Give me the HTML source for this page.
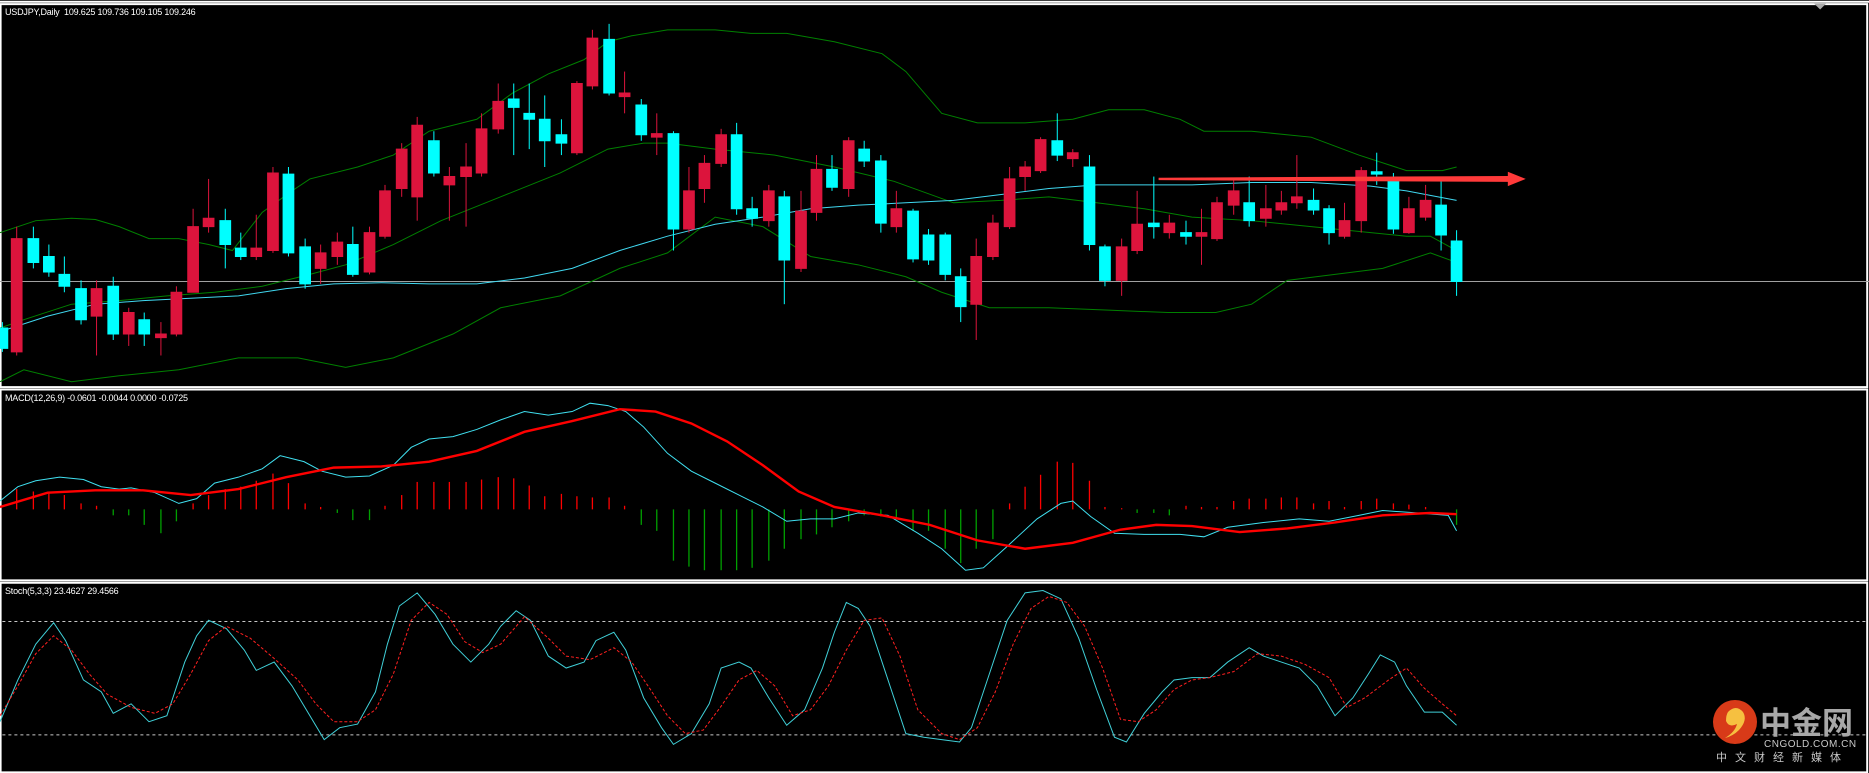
<!DOCTYPE html>
<html><head><meta charset="utf-8"><style>
html,body{margin:0;padding:0;background:#000;width:1869px;height:773px;overflow:hidden;position:relative}
svg{position:absolute;left:0;top:0}
.t{position:absolute;color:#fff;font:9px "Liberation Sans",sans-serif;letter-spacing:-0.2px;white-space:nowrap}
.r{fill:#dc143c;stroke:#dc143c}.c{fill:#00ffff;stroke:#00ffff}
line,rect,polyline{vector-effect:non-scaling-stroke}
</style></head><body>
<svg width="1869" height="773" viewBox="0 0 1568 648" preserveAspectRatio="none">
<rect x="0" y="0" width="1568" height="648" fill="#000"/>
<g fill="none" stroke="#fff" stroke-width="2">
<line x1="0" y1="1.5" x2="1568" y2="1.5"/>
<rect x="0.5" y="3.5" width="1566" height="321"/>
<rect x="0.5" y="326.5" width="1566" height="160"/>
<rect x="0.5" y="488.5" width="1566" height="159"/>
</g>
<polygon points="1522,3 1532,3 1527,8" fill="#aaa"/>
<line x1="0" y1="236" x2="1568" y2="236" stroke="#a0a0a0" stroke-width="1"/>
<g fill="none" stroke="#008000" stroke-width="1">
<polyline points="0,195 30,185 60,183 80,184 100,190 125,200 150,200 175,205 195,210 220,178 245,160 260,150 300,140 330,130 360,110 400,100 430,78 460,62 490,50 510,35 530,30 560,25 600,25 630,28 660,28 700,35 740,45 760,60 790,95 820,103 860,103 900,100 930,92 960,92 990,100 1010,110 1050,110 1100,115 1140,130 1180,143 1210,143 1222,140"/>
<polyline points="0,275 20,268 60,255 100,252 140,248 180,245 220,240 260,230 290,222 330,205 370,185 420,165 470,145 510,125 540,120 560,120 600,125 650,130 700,140 750,152 800,170 840,168 880,165 920,170 960,175 1000,182 1050,185 1100,190 1150,195 1180,198 1200,198 1222,210"/>
<polyline points="0,320 20,310 60,320 100,315 150,310 200,300 250,300 290,308 330,300 380,280 420,258 470,248 520,225 560,212 600,182 640,190 680,215 720,222 760,232 790,245 830,258 880,258 930,260 980,262 1020,262 1050,255 1080,235 1120,230 1160,225 1200,212 1222,220"/>
</g>
<polyline fill="none" stroke="#40d8f0" stroke-width="1" points="0,278 40,265 80,255 120,252 160,250 200,248 240,242 280,238 320,237 360,238 400,238 440,233 480,225 520,210 560,198 600,188 640,182 680,175 720,172 760,170 800,168 840,163 880,158 920,155 960,155 1000,155 1050,153 1100,153 1150,156 1180,160 1222,168"/>
<g stroke-width="1">
<line class="c" x1="2" y1="270" x2="2" y2="295"/><rect class="c" x="-2.5" y="275" width="9" height="17"/>
<line class="r" x1="14" y1="190" x2="14" y2="298"/><rect class="r" x="9.5" y="200" width="9" height="95"/>
<line class="c" x1="28" y1="190" x2="28" y2="225"/><rect class="c" x="23.5" y="200" width="9" height="20"/>
<line class="c" x1="41" y1="205" x2="41" y2="232"/><rect class="c" x="36.5" y="215" width="9" height="13"/>
<line class="c" x1="54" y1="215" x2="54" y2="245"/><rect class="c" x="49.5" y="230" width="9" height="10"/>
<line class="c" x1="68" y1="235" x2="68" y2="272"/><rect class="c" x="63.5" y="242" width="9" height="26"/>
<line class="r" x1="81" y1="235" x2="81" y2="298"/><rect class="r" x="76.5" y="242" width="9" height="23"/>
<line class="c" x1="95" y1="232" x2="95" y2="285"/><rect class="c" x="90.5" y="240" width="9" height="40"/>
<line class="r" x1="108" y1="258" x2="108" y2="290"/><rect class="r" x="103.5" y="262" width="9" height="18"/>
<line class="c" x1="121" y1="262" x2="121" y2="290"/><rect class="c" x="116.5" y="268" width="9" height="12"/>
<line class="r" x1="135" y1="270" x2="135" y2="298"/><rect class="r" x="130.5" y="280" width="9" height="3"/>
<line class="r" x1="148" y1="240" x2="148" y2="282"/><rect class="r" x="143.5" y="245" width="9" height="35"/>
<line class="r" x1="162" y1="175" x2="162" y2="245"/><rect class="r" x="157.5" y="190" width="9" height="55"/>
<line class="r" x1="175" y1="150" x2="175" y2="195"/><rect class="r" x="170.5" y="183" width="9" height="7"/>
<line class="c" x1="189" y1="175" x2="189" y2="225"/><rect class="c" x="184.5" y="185" width="9" height="20"/>
<line class="c" x1="202" y1="195" x2="202" y2="218"/><rect class="c" x="197.5" y="208" width="9" height="7"/>
<line class="r" x1="215" y1="180" x2="215" y2="218"/><rect class="r" x="210.5" y="208" width="9" height="7"/>
<line class="r" x1="229" y1="140" x2="229" y2="212"/><rect class="r" x="224.5" y="145" width="9" height="65"/>
<line class="c" x1="242" y1="140" x2="242" y2="215"/><rect class="c" x="237.5" y="146" width="9" height="66"/>
<line class="c" x1="256" y1="200" x2="256" y2="242"/><rect class="c" x="251.5" y="207" width="9" height="31"/>
<line class="r" x1="269" y1="205" x2="269" y2="238"/><rect class="r" x="264.5" y="212" width="9" height="13"/>
<line class="r" x1="283" y1="195" x2="283" y2="222"/><rect class="r" x="278.5" y="203" width="9" height="12"/>
<line class="c" x1="296" y1="190" x2="296" y2="232"/><rect class="c" x="291.5" y="205" width="9" height="25"/>
<line class="r" x1="310" y1="190" x2="310" y2="230"/><rect class="r" x="305.5" y="195" width="9" height="33"/>
<line class="r" x1="323" y1="155" x2="323" y2="200"/><rect class="r" x="318.5" y="160" width="9" height="38"/>
<line class="r" x1="337" y1="120" x2="337" y2="165"/><rect class="r" x="332.5" y="125" width="9" height="33"/>
<line class="r" x1="350" y1="98" x2="350" y2="185"/><rect class="r" x="345.5" y="105" width="9" height="60"/>
<line class="c" x1="364" y1="110" x2="364" y2="148"/><rect class="c" x="359.5" y="118" width="9" height="27"/>
<line class="r" x1="377" y1="140" x2="377" y2="185"/><rect class="r" x="372.5" y="148" width="9" height="7"/>
<line class="r" x1="391" y1="120" x2="391" y2="190"/><rect class="r" x="386.5" y="140" width="9" height="8"/>
<line class="r" x1="404" y1="95" x2="404" y2="148"/><rect class="r" x="399.5" y="108" width="9" height="37"/>
<line class="r" x1="418" y1="70" x2="418" y2="112"/><rect class="r" x="413.5" y="85" width="9" height="23"/>
<line class="c" x1="431" y1="70" x2="431" y2="130"/><rect class="c" x="426.5" y="83" width="9" height="7"/>
<line class="c" x1="444" y1="70" x2="444" y2="125"/><rect class="c" x="439.5" y="95" width="9" height="5"/>
<line class="c" x1="457" y1="80" x2="457" y2="140"/><rect class="c" x="452.5" y="100" width="9" height="18"/>
<line class="c" x1="471" y1="100" x2="471" y2="130"/><rect class="c" x="466.5" y="113" width="9" height="7"/>
<line class="r" x1="484" y1="68" x2="484" y2="130"/><rect class="r" x="479.5" y="70" width="9" height="58"/>
<line class="r" x1="497" y1="25" x2="497" y2="75"/><rect class="r" x="492.5" y="32" width="9" height="40"/>
<line class="c" x1="511" y1="20" x2="511" y2="80"/><rect class="c" x="506.5" y="33" width="9" height="45"/>
<line class="r" x1="524" y1="60" x2="524" y2="95"/><rect class="r" x="519.5" y="78" width="9" height="3"/>
<line class="c" x1="538" y1="83" x2="538" y2="118"/><rect class="c" x="533.5" y="88" width="9" height="25"/>
<line class="r" x1="551" y1="95" x2="551" y2="130"/><rect class="r" x="546.5" y="112" width="9" height="3"/>
<line class="c" x1="565" y1="110" x2="565" y2="210"/><rect class="c" x="560.5" y="112" width="9" height="80"/>
<line class="r" x1="578" y1="140" x2="578" y2="195"/><rect class="r" x="573.5" y="160" width="9" height="32"/>
<line class="r" x1="591" y1="130" x2="591" y2="170"/><rect class="r" x="586.5" y="137" width="9" height="21"/>
<line class="r" x1="605" y1="108" x2="605" y2="140"/><rect class="r" x="600.5" y="113" width="9" height="24"/>
<line class="c" x1="618" y1="103" x2="618" y2="180"/><rect class="c" x="613.5" y="113" width="9" height="62"/>
<line class="c" x1="631" y1="165" x2="631" y2="190"/><rect class="c" x="626.5" y="175" width="9" height="8"/>
<line class="r" x1="645" y1="155" x2="645" y2="190"/><rect class="r" x="640.5" y="160" width="9" height="25"/>
<line class="c" x1="658" y1="160" x2="658" y2="255"/><rect class="c" x="653.5" y="165" width="9" height="53"/>
<line class="r" x1="672" y1="160" x2="672" y2="228"/><rect class="r" x="667.5" y="177" width="9" height="48"/>
<line class="r" x1="685" y1="130" x2="685" y2="185"/><rect class="r" x="680.5" y="142" width="9" height="36"/>
<line class="c" x1="698" y1="130" x2="698" y2="160"/><rect class="c" x="693.5" y="142" width="9" height="15"/>
<line class="r" x1="712" y1="115" x2="712" y2="165"/><rect class="r" x="707.5" y="118" width="9" height="40"/>
<line class="c" x1="725" y1="118" x2="725" y2="140"/><rect class="c" x="720.5" y="125" width="9" height="10"/>
<line class="c" x1="739" y1="130" x2="739" y2="195"/><rect class="c" x="734.5" y="135" width="9" height="52"/>
<line class="r" x1="752" y1="160" x2="752" y2="195"/><rect class="r" x="747.5" y="175" width="9" height="15"/>
<line class="c" x1="766" y1="175" x2="766" y2="220"/><rect class="c" x="761.5" y="177" width="9" height="40"/>
<line class="c" x1="779" y1="192" x2="779" y2="222"/><rect class="c" x="774.5" y="197" width="9" height="21"/>
<line class="c" x1="793" y1="195" x2="793" y2="235"/><rect class="c" x="788.5" y="197" width="9" height="33"/>
<line class="c" x1="806" y1="225" x2="806" y2="270"/><rect class="c" x="801.5" y="232" width="9" height="25"/>
<line class="r" x1="819" y1="200" x2="819" y2="285"/><rect class="r" x="814.5" y="215" width="9" height="40"/>
<line class="r" x1="833" y1="180" x2="833" y2="218"/><rect class="r" x="828.5" y="187" width="9" height="28"/>
<line class="r" x1="847" y1="140" x2="847" y2="192"/><rect class="r" x="842.5" y="150" width="9" height="40"/>
<line class="r" x1="860" y1="135" x2="860" y2="160"/><rect class="r" x="855.5" y="140" width="9" height="8"/>
<line class="r" x1="873" y1="115" x2="873" y2="145"/><rect class="r" x="868.5" y="117" width="9" height="26"/>
<line class="c" x1="887" y1="95" x2="887" y2="135"/><rect class="c" x="882.5" y="118" width="9" height="12"/>
<line class="r" x1="900" y1="125" x2="900" y2="140"/><rect class="r" x="895.5" y="128" width="9" height="5"/>
<line class="c" x1="914" y1="130" x2="914" y2="210"/><rect class="c" x="909.5" y="140" width="9" height="65"/>
<line class="c" x1="927" y1="205" x2="927" y2="240"/><rect class="c" x="922.5" y="207" width="9" height="28"/>
<line class="r" x1="941" y1="200" x2="941" y2="248"/><rect class="r" x="936.5" y="207" width="9" height="28"/>
<line class="r" x1="954" y1="160" x2="954" y2="213"/><rect class="r" x="949.5" y="188" width="9" height="22"/>
<line class="c" x1="968" y1="148" x2="968" y2="200"/><rect class="c" x="963.5" y="187" width="9" height="3"/>
<line class="r" x1="981" y1="180" x2="981" y2="200"/><rect class="r" x="976.5" y="187" width="9" height="8"/>
<line class="c" x1="995" y1="185" x2="995" y2="205"/><rect class="c" x="990.5" y="195" width="9" height="3"/>
<line class="r" x1="1008" y1="175" x2="1008" y2="222"/><rect class="r" x="1003.5" y="195" width="9" height="3"/>
<line class="r" x1="1021" y1="165" x2="1021" y2="202"/><rect class="r" x="1016.5" y="170" width="9" height="30"/>
<line class="r" x1="1035" y1="150" x2="1035" y2="180"/><rect class="r" x="1030.5" y="160" width="9" height="12"/>
<line class="c" x1="1048" y1="148" x2="1048" y2="190"/><rect class="c" x="1043.5" y="170" width="9" height="15"/>
<line class="r" x1="1062" y1="155" x2="1062" y2="190"/><rect class="r" x="1057.5" y="175" width="9" height="8"/>
<line class="r" x1="1075" y1="160" x2="1075" y2="180"/><rect class="r" x="1070.5" y="170" width="9" height="6"/>
<line class="r" x1="1088" y1="130" x2="1088" y2="175"/><rect class="r" x="1083.5" y="165" width="9" height="5"/>
<line class="c" x1="1102" y1="158" x2="1102" y2="180"/><rect class="c" x="1097.5" y="168" width="9" height="8"/>
<line class="c" x1="1115" y1="172" x2="1115" y2="205"/><rect class="c" x="1110.5" y="175" width="9" height="20"/>
<line class="r" x1="1128" y1="170" x2="1128" y2="200"/><rect class="r" x="1123.5" y="185" width="9" height="13"/>
<line class="r" x1="1142" y1="140" x2="1142" y2="195"/><rect class="r" x="1137.5" y="143" width="9" height="42"/>
<line class="c" x1="1155" y1="128" x2="1155" y2="155"/><rect class="c" x="1150.5" y="144" width="9" height="2"/>
<line class="c" x1="1169" y1="145" x2="1169" y2="196"/><rect class="c" x="1164.5" y="150" width="9" height="42"/>
<line class="r" x1="1182" y1="165" x2="1182" y2="196"/><rect class="r" x="1177.5" y="175" width="9" height="20"/>
<line class="r" x1="1196" y1="155" x2="1196" y2="185"/><rect class="r" x="1191.5" y="168" width="9" height="14"/>
<line class="c" x1="1209" y1="150" x2="1209" y2="210"/><rect class="c" x="1204.5" y="172" width="9" height="25"/>
<line class="c" x1="1222" y1="193" x2="1222" y2="248"/><rect class="c" x="1217.5" y="202" width="9" height="34"/>
</g>
<polygon points="972,149 1265,147.5 1265,144 1280,150 1265,156 1265,152.5 972,151" fill="#ff3a3a"/>

<g stroke-width="1.3">
<g stroke="#ff0000">
<line x1="14" y1="427" x2="14" y2="410"/><line x1="28" y1="427" x2="28" y2="412"/><line x1="41" y1="427" x2="41" y2="413"/><line x1="54" y1="427" x2="54" y2="415"/><line x1="68" y1="427" x2="68" y2="422"/><line x1="81" y1="427" x2="81" y2="424"/>
<line x1="162" y1="427" x2="162" y2="422"/><line x1="175" y1="427" x2="175" y2="415"/><line x1="189" y1="427" x2="189" y2="410"/><line x1="202" y1="427" x2="202" y2="408"/><line x1="215" y1="427" x2="215" y2="403"/><line x1="229" y1="427" x2="229" y2="397"/><line x1="242" y1="427" x2="242" y2="405"/><line x1="256" y1="427" x2="256" y2="422"/><line x1="269" y1="427" x2="269" y2="425"/>
<line x1="323" y1="427" x2="323" y2="424"/><line x1="337" y1="427" x2="337" y2="415"/><line x1="350" y1="427" x2="350" y2="404"/><line x1="364" y1="427" x2="364" y2="404"/><line x1="377" y1="427" x2="377" y2="404"/><line x1="391" y1="427" x2="391" y2="404"/><line x1="404" y1="427" x2="404" y2="402"/><line x1="418" y1="427" x2="418" y2="400"/><line x1="431" y1="427" x2="431" y2="401"/><line x1="444" y1="427" x2="444" y2="407"/><line x1="457" y1="427" x2="457" y2="416"/><line x1="471" y1="427" x2="471" y2="414"/><line x1="484" y1="427" x2="484" y2="416"/><line x1="497" y1="427" x2="497" y2="417"/><line x1="511" y1="427" x2="511" y2="417"/><line x1="524" y1="427" x2="524" y2="424"/>
<line x1="847" y1="427" x2="847" y2="422"/><line x1="860" y1="427" x2="860" y2="408"/><line x1="873" y1="427" x2="873" y2="398"/><line x1="887" y1="427" x2="887" y2="387"/><line x1="900" y1="427" x2="900" y2="388"/><line x1="914" y1="427" x2="914" y2="403"/><line x1="927" y1="427" x2="927" y2="425"/><line x1="941" y1="427" x2="941" y2="426"/>
<line x1="995" y1="427" x2="995" y2="424"/><line x1="1008" y1="427" x2="1008" y2="425"/><line x1="1021" y1="427" x2="1021" y2="425"/><line x1="1035" y1="427" x2="1035" y2="420"/><line x1="1048" y1="427" x2="1048" y2="418"/><line x1="1062" y1="427" x2="1062" y2="418"/><line x1="1075" y1="427" x2="1075" y2="417"/><line x1="1088" y1="427" x2="1088" y2="417"/><line x1="1102" y1="427" x2="1102" y2="422"/><line x1="1115" y1="427" x2="1115" y2="420"/><line x1="1128" y1="427" x2="1128" y2="425"/><line x1="1142" y1="427" x2="1142" y2="420"/><line x1="1155" y1="427" x2="1155" y2="418"/><line x1="1169" y1="427" x2="1169" y2="422"/><line x1="1182" y1="427" x2="1182" y2="423"/><line x1="1196" y1="427" x2="1196" y2="425"/>
</g>
<g stroke="#00a000">
<line x1="95" y1="427" x2="95" y2="432"/><line x1="108" y1="427" x2="108" y2="432"/><line x1="121" y1="427" x2="121" y2="440"/><line x1="135" y1="427" x2="135" y2="447"/><line x1="148" y1="427" x2="148" y2="437"/>
<line x1="283" y1="427" x2="283" y2="430"/><line x1="296" y1="427" x2="296" y2="436"/><line x1="310" y1="427" x2="310" y2="436"/>
<line x1="538" y1="427" x2="538" y2="440"/><line x1="551" y1="427" x2="551" y2="445"/><line x1="565" y1="427" x2="565" y2="470"/><line x1="578" y1="427" x2="578" y2="475"/><line x1="591" y1="427" x2="591" y2="478"/><line x1="605" y1="427" x2="605" y2="478"/><line x1="618" y1="427" x2="618" y2="478"/><line x1="631" y1="427" x2="631" y2="476"/><line x1="645" y1="427" x2="645" y2="470"/><line x1="658" y1="427" x2="658" y2="460"/><line x1="672" y1="427" x2="672" y2="452"/><line x1="685" y1="427" x2="685" y2="448"/><line x1="698" y1="427" x2="698" y2="442"/><line x1="712" y1="427" x2="712" y2="437"/><line x1="725" y1="427" x2="725" y2="432"/><line x1="739" y1="427" x2="739" y2="433"/><line x1="752" y1="427" x2="752" y2="435"/><line x1="766" y1="427" x2="766" y2="445"/><line x1="779" y1="427" x2="779" y2="445"/><line x1="793" y1="427" x2="793" y2="460"/><line x1="806" y1="427" x2="806" y2="472"/><line x1="819" y1="427" x2="819" y2="460"/><line x1="833" y1="427" x2="833" y2="452"/>
<line x1="954" y1="427" x2="954" y2="430"/><line x1="968" y1="427" x2="968" y2="430"/><line x1="981" y1="427" x2="981" y2="432"/><line x1="1222" y1="427" x2="1222" y2="440"/>
</g></g>
<polyline fill="none" stroke="#40e0f0" stroke-width="1" points="0,420 15,408 30,403 50,400 70,402 85,408 100,410 110,409 130,413 150,422 165,418 180,405 200,400 220,393 235,382 255,387 270,395 290,400 310,399 330,390 345,375 360,368 380,366 400,360 420,352 440,345 460,348 480,345 495,338 510,340 525,345 540,358 560,380 580,395 600,405 620,415 640,425 660,437 680,435 700,435 720,430 745,432 770,447 790,460 810,478 825,476 845,458 870,435 890,422 900,420 915,433 935,447 960,448 990,448 1010,450 1030,442 1060,438 1090,435 1115,437 1140,432 1160,428 1190,430 1215,432 1222,445"/>
<polyline fill="none" stroke="#ff0000" stroke-width="2.4" points="0,425 40,413 80,411 120,411 160,415 200,410 240,400 280,392 320,391 360,387 400,378 440,362 480,353 520,343 550,345 580,355 610,370 640,390 670,412 700,425 740,432 780,440 820,453 860,460 900,455 940,444 970,440 1000,441 1040,446 1080,443 1120,438 1160,432 1200,430 1222,431"/>

<g stroke="#c8c8c8" stroke-width="1" stroke-dasharray="3,3">
<line x1="2" y1="521" x2="1566" y2="521"/><line x1="2" y1="616" x2="1566" y2="616"/>
</g>
<polyline fill="none" stroke="#40d0d8" stroke-width="1" points="0,605 15,570 30,540 45,522 55,537 70,570 85,580 95,598 110,590 125,605 140,600 155,555 165,533 175,520 190,527 205,545 215,562 230,555 245,575 260,600 272,620 285,610 300,607 315,580 325,540 335,508 350,497 365,515 380,540 395,555 410,540 420,525 433,512 445,520 460,550 475,560 490,555 500,537 515,530 525,545 540,585 555,610 565,624 580,615 595,590 605,560 620,555 630,560 645,585 660,608 675,595 690,560 700,530 710,505 720,510 730,525 745,570 760,615 775,618 790,620 805,622 815,610 830,565 845,520 860,497 875,495 890,502 905,535 920,578 935,618 945,622 960,598 975,580 985,570 1000,568 1015,568 1030,555 1048,543 1060,550 1075,555 1090,560 1105,575 1120,600 1135,585 1148,565 1158,549 1170,555 1180,575 1195,597 1210,597 1222,608"/>
<polyline fill="none" stroke="#ff2020" stroke-width="1" stroke-dasharray="3,2" points="0,600 15,575 30,548 45,533 60,545 75,565 90,582 110,593 130,598 145,590 160,565 175,537 190,525 210,535 230,552 250,570 265,590 280,605 300,605 315,595 330,565 345,520 360,505 375,515 390,538 405,547 420,540 440,517 460,535 475,550 495,553 515,543 530,555 545,577 560,600 575,615 590,612 605,592 620,570 635,562 650,575 665,600 680,595 695,575 710,545 725,520 740,518 755,550 770,595 790,615 805,620 820,610 835,580 850,540 865,510 880,500 895,505 910,525 925,560 940,603 955,605 970,595 985,578 1000,570 1015,568 1035,563 1055,548 1075,550 1095,557 1115,568 1130,593 1145,585 1165,570 1180,560 1195,577 1210,590 1222,600"/>
</svg>
<div class="t" style="left:5px;top:7px">USDJPY,Daily&nbsp; 109.625 109.736 109.105 109.246</div>
<div class="t" style="left:5px;top:393px">MACD(12,26,9) -0.0601 -0.0044 0.0000 -0.0725</div>
<div class="t" style="left:5px;top:586px">Stoch(5,3,3) 23.4627 29.4566</div>
<svg width="1869" height="773" viewBox="0 0 1869 773" style="pointer-events:none">
<circle cx="1735" cy="722" r="22" fill="#d83a18"/>
<path d="M1728,712 q8,-8 15,0 q5,8 -4,18 q-6,6 -14,8 q10,-6 12,-14 q-8,4 -11,-3 q0,-6 2,-9z" fill="#f6c040"/>
<text x="1760" y="734" font-family="'Noto Sans CJK SC',sans-serif" font-weight="bold" font-size="31" fill="#a8a8a8">中金网</text>
<text x="1764" y="747" font-family="'Liberation Sans',sans-serif" font-size="10" fill="#c8c8c8" letter-spacing="0.5">CNGOLD.COM.CN</text>
<text x="1716" y="761" font-family="'Noto Sans CJK SC',sans-serif" font-size="11" fill="#c8c8c8" letter-spacing="8">中文财经新媒体</text>
</svg>
</body></html>
